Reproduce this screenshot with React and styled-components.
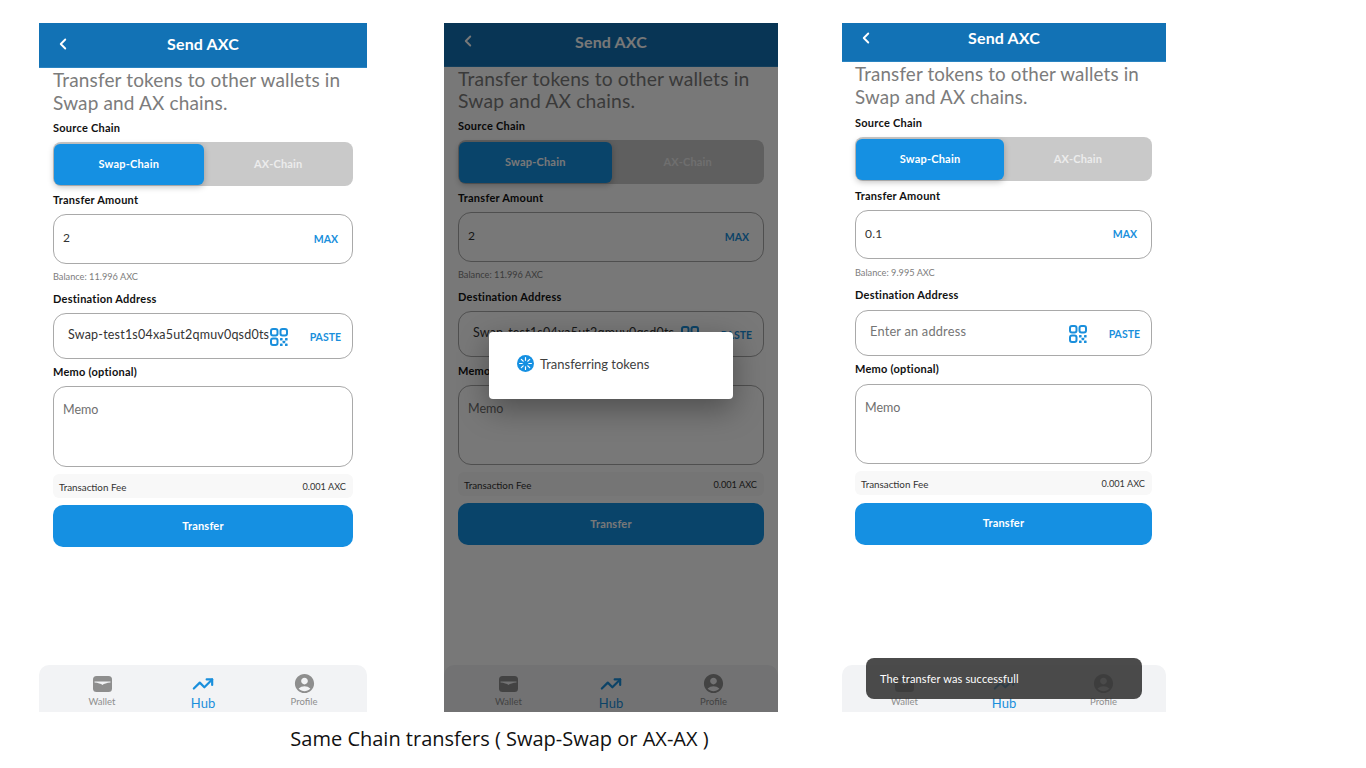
import * as React from "react";
import styled, { createGlobalStyle } from "styled-components";
import { ChevronLeft, TrendingUp } from "lucide-react";
import { MdAccountCircle } from "react-icons/md";

const GlobalStyle = createGlobalStyle`
  html, body {
    margin: 0;
    padding: 0;
    background: #fff;
    width: 1366px;
    height: 768px;
    overflow: hidden;
    font-family: "Lato", "Liberation Sans", sans-serif;
  }
  * { box-sizing: border-box; }
`;

const Page = styled.div`
  display: flex;
  flex-direction: column;
  width: 1366px;
  height: 768px;
  padding-top: 23px;
`;

const Screens = styled.div`
  display: flex;
  padding-left: 39px;
`;

const Phone = styled.div`
  position: relative;
  display: flex;
  flex-direction: column;
  flex: none;
  width: ${p => p.$width}px;
  height: 689px;
  margin-right: ${p => p.$after}px;
  background: #fff;
  overflow: hidden;
`;

const Header = styled.div`
  display: flex;
  align-items: center;
  flex: none;
  height: ${p => p.$height}px;
  padding-left: 15px;
  padding-bottom: ${p => p.$lift}px;
  background: #1272b5;
  border-bottom: 1px solid #2a84c2;
  color: #fff;
`;

const HeaderTitle = styled.div`
  flex: 1;
  margin-left: -33px;
  text-align: center;
  font-size: 16px;
  font-weight: 700;
  letter-spacing: 0.15px;
`;

const Form = styled.div`
  display: flex;
  flex-direction: column;
  gap: ${p => p.$gap}px;
  padding: ${p => p.$top}px 14px 0 ${p => p.$left}px;
`;

const Intro = styled.div`
  font-size: ${p => p.$size}px;
  line-height: ${p => p.$line}px;
  color: #7c7c7c;
  letter-spacing: 0.15px;
  white-space: nowrap;
`;

const Label = styled.div`
  font-size: 11px;
  line-height: 14px;
  font-weight: 700;
  color: #111;
  letter-spacing: 0.25px;
`;

const Segment = styled.div`
  display: flex;
  height: 44px;
  padding: 2px 0 1px 1px;
  border-radius: 8px;
  background: #c9c9c9;
`;

const SegmentItem = styled.div`
  display: flex;
  align-items: center;
  justify-content: center;
  flex: 1;
  padding-bottom: 2px;
  border-radius: 6px;
  font-size: 11px;
  font-weight: 700;
  letter-spacing: 0.2px;
  color: ${p => (p.$active ? "#fff" : "#ececec")};
  background: ${p => (p.$active ? "#1590e2" : "transparent")};
  box-shadow: ${p => (p.$active ? "0 2px 6px rgba(0,0,0,.25)" : "none")};
`;

const InputBox = styled.div`
  display: flex;
  align-items: center;
  height: ${p => p.$height}px;
  margin-bottom: ${p => p.$pull || 0}px;
  padding: 0 11px 0 ${p => p.$left}px;
  border: 1px solid #a9a9a9;
  border-radius: 13px;
  background: #fff;
  color: ${p => p.$color};
`;

const InputText = styled.div`
  flex: 1;
  min-width: 0;
  margin-top: -3px;
  font-size: ${p => p.$size}px;
  letter-spacing: 0.2px;
  white-space: nowrap;
`;

const QrWrap = styled.div`
  display: flex;
  flex: none;
  margin-top: 2px;
`;

const ActionText = styled.div`
  flex: none;
  margin-left: ${p => p.$gap}px;
  margin-right: ${p => p.$inset}px;
  margin-top: ${p => p.$shift}px;
  font-size: 10.5px;
  font-weight: 700;
  color: #1a8fdc;
`;

const Balance = styled.div`
  font-size: 9.2px;
  line-height: 12px;
  color: #7d7d7d;
  margin-bottom: 2px;
`;

const MemoBox = styled.div`
  height: ${p => p.$height}px;
  padding: 15px 9px;
  border: 1px solid #a9a9a9;
  border-radius: 13px;
  background: #fff;
  font-size: 12.5px;
  line-height: 16px;
  color: #6f6f6f;
`;

const FeeRow = styled.div`
  display: flex;
  align-items: center;
  justify-content: space-between;
  height: 24px;
  padding: 1px 7px 0 6px;
  border-radius: 6px;
  background: #f8f8f8;
  font-size: 9.8px;
  color: #333;
`;

const FeeValue = styled.span`
  font-size: 9.2px;
`;

const SubmitButton = styled.div`
  display: flex;
  align-items: center;
  justify-content: center;
  height: 42px;
  padding-bottom: 2px;
  border-radius: 10px;
  background: #1590e2;
  color: #fff;
  font-size: 11px;
  font-weight: 700;
  letter-spacing: 0.2px;
`;

const Nav = styled.div`
  display: grid;
  grid-template-columns: repeat(3, ${p => p.$column}px);
  justify-content: center;
  flex: none;
  height: 47px;
  margin-top: auto;
  padding-top: 8px;
  border-radius: 10px 10px 0 0;
  background: #f2f3f5;
`;

const NavItem = styled.div`
  display: flex;
  flex-direction: column;
  align-items: center;
  color: ${p => (p.$active ? "#1a8fdc" : "#8e8e8e")};
`;

const NavIcon = styled.div`
  display: flex;
  align-items: center;
  justify-content: center;
  height: 21px;
`;

const NavLabel = styled.div`
  font-size: ${p => (p.$active ? 13 : 9.5)}px;
  line-height: ${p => (p.$active ? 16 : 12)}px;
  margin-top: ${p => (p.$active ? 1 : 2)}px;
`;

const Dim = styled.div`
  position: absolute;
  inset: 0;
  background: rgba(0, 0, 0, 0.53);
`;

const Dialog = styled.div`
  position: absolute;
  left: 45px;
  top: 309px;
  display: flex;
  align-items: center;
  gap: 6px;
  width: 244px;
  height: 67px;
  padding: 0 0 4px 28px;
  border-radius: 4px;
  background: #fff;
  box-shadow: 0 10px 30px rgba(0, 0, 0, 0.35);
  font-size: 13px;
  color: #3f3f3f;
`;

const Toast = styled.div`
  position: absolute;
  left: 24px;
  top: 635px;
  display: flex;
  align-items: center;
  width: 276px;
  height: 41px;
  padding-left: 14px;
  border-radius: 8px;
  background: rgba(50, 50, 50, 0.88);
  color: #fff;
  font-size: 11px;
  letter-spacing: 0.15px;
`;

const Caption = styled.div`
  width: 999px;
  margin-top: 14px;
  text-align: center;
  font-family: "Open Sans", "Liberation Sans", sans-serif;
  font-size: 20px;
  line-height: 26px;
  color: #111;
`;

const QrIcon = () => (
  <svg width="18" height="18" viewBox="0 0 18 18" fill="none" stroke="#1a8fdc" strokeWidth="2">
    <rect x="1" y="1" width="6.5" height="6.5" rx="2" />
    <rect x="10.5" y="1" width="6.5" height="6.5" rx="2" />
    <rect x="1" y="10.5" width="6.5" height="6.5" rx="2" />
    <g fill="#1a8fdc" stroke="none">
      <rect x="10" y="10" width="2.6" height="2.6" rx=".6" />
      <rect x="15" y="10" width="2.6" height="2.6" rx=".6" />
      <rect x="12.6" y="12.7" width="2.6" height="2.6" rx=".6" />
      <rect x="10" y="15.4" width="2.6" height="2.6" rx=".6" />
      <rect x="15" y="15.4" width="2.6" height="2.6" rx=".6" />
    </g>
  </svg>
);

const WalletIcon = () => (
  <svg width="19" height="16" viewBox="0 0 19 16">
    <rect width="19" height="16" rx="3.5" fill="#8e8e8e" />
    <path d="M1.5 5.6h16v.9c-3.6.4-6.6 1.2-8 2.4-1.6-1.2-4.6-2-8-2.4z" fill="#f2f3f5" />
  </svg>
);

const Spinner = () => (
  <svg width="17" height="17" viewBox="0 0 17 17">
    <circle cx="8.5" cy="8.5" r="8.5" fill="#1590e2" />
    <g stroke="#fff" strokeWidth="1.2" strokeLinecap="round">
      <path d="M8.5 2.6v2.6M8.5 11.8v2.6M2.6 8.5h2.6M11.8 8.5h2.6M4.3 4.3l1.9 1.9M10.8 10.8l1.9 1.9M4.3 12.7l1.9-1.9M10.8 6.2l1.9-1.9" />
    </g>
  </svg>
);

const screens = [
  {
    width: 328, after: 77, header: 45, lift: 3, top: 0, left: 14, line: 23, introSize: 19, gap: 7, column: 101, pull: -1,
    amount: "2", balance: "Balance: 11.996 AXC", address: "Swap-test1s04xa5ut2qmuv0qsd0ts",
    addressColor: "#333", addressLeft: 14, addressSize: 12.5, pasteGap: 22, inputHeight: 50, memoHeight: 81,
  },
  {
    width: 334, after: 64, header: 44, lift: 7, top: 1, left: 14, line: 22, introSize: 19.3, gap: 7, column: 102.5, pull: 0,
    amount: "2", balance: "Balance: 11.996 AXC", address: "Swap-test1s04xa5ut2qmuv0qsd0ts",
    addressColor: "#333", addressLeft: 14, addressSize: 12.5, pasteGap: 22, inputHeight: 50, memoHeight: 80,
    dialog: true,
  },
  {
    width: 324, after: 0, header: 39, lift: 9, top: 0, left: 13, line: 23, introSize: 18.8, gap: 7.5, column: 99.5, pull: -1,
    amount: "0.1", balance: "Balance: 9.995 AXC", address: "Enter an address",
    addressColor: "#757575", addressLeft: 14, addressSize: 12.8, pasteGap: 22, inputHeight: 49, memoHeight: 80,
    toast: true,
  },
];

const SendScreen = ({ screen }) => (
  <Phone $width={screen.width} $after={screen.after}>
    <Header $height={screen.header} $lift={screen.lift}>
      <ChevronLeft size={18} strokeWidth={2.5} />
      <HeaderTitle>Send AXC</HeaderTitle>
    </Header>
    <Form $gap={screen.gap} $top={screen.top} $left={screen.left}>
      <Intro $line={screen.line} $size={screen.introSize}>
        Transfer tokens to other wallets in
        <br />
        Swap and AX chains.
      </Intro>
      <Label>Source Chain</Label>
      <Segment>
        <SegmentItem $active>Swap-Chain</SegmentItem>
        <SegmentItem>AX-Chain</SegmentItem>
      </Segment>
      <Label>Transfer Amount</Label>
      <InputBox $height={screen.inputHeight} $left={9} $color="#333">
        <InputText $size={12}>{screen.amount}</InputText>
        <ActionText $gap={0} $inset={3} $shift={-1}>MAX</ActionText>
      </InputBox>
      <Balance>{screen.balance}</Balance>
      <Label>Destination Address</Label>
      <InputBox $height={46} $pull={screen.pull} $left={screen.addressLeft} $color={screen.addressColor}>
        <InputText $size={screen.addressSize}>{screen.address}</InputText>
        <QrWrap><QrIcon /></QrWrap>
        <ActionText $gap={screen.pasteGap} $inset={0} $shift={2}>PASTE</ActionText>
      </InputBox>
      <Label>Memo (optional)</Label>
      <MemoBox $height={screen.memoHeight}>Memo</MemoBox>
      <FeeRow>
        <span>Transaction Fee</span>
        <FeeValue>0.001 AXC</FeeValue>
      </FeeRow>
      <SubmitButton>Transfer</SubmitButton>
    </Form>
    <Nav $column={screen.column}>
      <NavItem>
        <NavIcon><WalletIcon /></NavIcon>
        <NavLabel>Wallet</NavLabel>
      </NavItem>
      <NavItem $active>
        <NavIcon><TrendingUp size={22} strokeWidth={2.4} /></NavIcon>
        <NavLabel $active>Hub</NavLabel>
      </NavItem>
      <NavItem>
        <NavIcon><MdAccountCircle size={23} /></NavIcon>
        <NavLabel>Profile</NavLabel>
      </NavItem>
    </Nav>
    {screen.dialog && (
      <Dim>
        <Dialog>
          <Spinner />
          Transferring tokens
        </Dialog>
      </Dim>
    )}
    {screen.toast && <Toast>The transfer was successfull</Toast>}
  </Phone>
);

const App = () => (
  <Page>
    <GlobalStyle />
    <Screens>
      {screens.map((screen, index) => (
        <SendScreen key={`screen-${index}`} screen={screen} />
      ))}
    </Screens>
    <Caption>Same Chain transfers ( Swap-Swap or AX-AX )</Caption>
  </Page>
);

export default App;
